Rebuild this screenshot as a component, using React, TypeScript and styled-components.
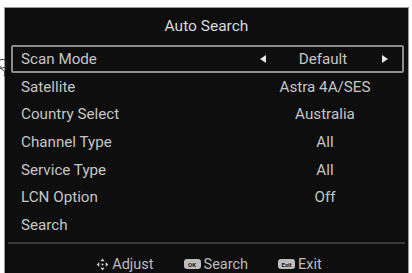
import React from "react";
import styled, { createGlobalStyle } from "styled-components";

const Global = createGlobalStyle`
  html, body { margin: 0; padding: 0; background: #ffffff; }
  body { font-family: Roboto, "Liberation Sans", Arial, sans-serif; }
`;

const Page = styled.div`
  width: 412px;
  height: 273px;
  overflow: hidden;
  position: relative;
  padding: 7px 3px 0 4px;
  box-sizing: border-box;
`;

const Panel = styled.div`
  width: 405px;
  height: 280px;
  background: #0e0e0e;
  border: 1px solid #9a9a9a;
  box-sizing: border-box;
  display: flex;
  flex-direction: column;
`;

const Title = styled.div`
  height: 37px;
  display: flex;
  align-items: center;
  justify-content: center;
  color: #dadada;
  font-size: 15.5px;
  padding-bottom: 2px;
  box-sizing: border-box;
`;

const List = styled.div`
  display: flex;
  flex-direction: column;
  padding: 0 4px 0 6px;
`;

const Row = styled.div<{ $active?: boolean }>`
  height: 27.7px;
  box-sizing: border-box;
  display: grid;
  grid-template-columns: 1fr 136px;
  align-items: center;
  padding: 0 11px 0 ${(p) => (p.$active ? 8 : 10)}px;
  border: ${(p) => (p.$active ? "2px solid #8c8c8c" : "none")};
  border-radius: 2px;
  color: #c6c6c6;
  font-size: 15.2px;
`;

const Label = styled.span`
  white-space: nowrap;
`;

const Value = styled.div`
  display: flex;
  align-items: center;
  justify-content: center;
  position: relative;
  white-space: nowrap;
`;

const Arrow = styled.span<{ $side: "left" | "right" }>`
  position: absolute;
  top: 50%;
  ${(p) => (p.$side === "left" ? "left: 5px;" : "right: 3px;")}
  transform: translateY(-50%);
  width: 0;
  height: 0;
  border-top: 4.5px solid transparent;
  border-bottom: 4.5px solid transparent;
  ${(p) =>
    p.$side === "left"
      ? "border-right: 6px solid #e6e6e6;"
      : "border-left: 6px solid #e6e6e6;"}
`;

const Divider = styled.div`
  height: 2px;
  background: #3a3a3a;
  margin: 3px 3px 0 3px;
`;

const Footer = styled.div`
  display: flex;
  align-items: center;
  justify-content: center;
  gap: 30px;
  padding-top: 12px;
  padding-left: 4px;
  color: #bdbdbd;
  font-size: 14.5px;
  line-height: 17px;
`;

const Hint = styled.div`
  display: flex;
  align-items: center;
  gap: 2px;
`;

const KeyBadge = styled.span`
  display: inline-flex;
  align-items: center;
  justify-content: center;
  width: 17px;
  height: 10px;
  border-radius: 3px;
  background: #bdbdbd;
  color: #1a1a1a;
  font-size: 6px;
  font-weight: 700;
  margin-right: 1px;
`;

const Mark = styled.svg`
  position: absolute;
  left: 0;
  top: 54px;
`;

const rows: { label: string; value?: string; active?: boolean }[] = [
  { label: "Scan Mode", value: "Default", active: true },
  { label: "Satellite", value: "Astra 4A/SES" },
  { label: "Country Select", value: "Australia" },
  { label: "Channel Type", value: "All" },
  { label: "Service Type", value: "All" },
  { label: "LCN Option", value: "Off" },
  { label: "Search" },
];

const DPad = () => (
  <svg width="15" height="15" viewBox="0 0 14 14">
    <path d="M7 1.5 L9 4 H5 Z" fill="#cfcfcf" />
    <path d="M7 12.5 L9 10 H5 Z" fill="#cfcfcf" />
    <path d="M1.5 7 L4 5 V9 Z" fill="#cfcfcf" />
    <path d="M12.5 7 L10 5 V9 Z" fill="#cfcfcf" />
    <circle cx="7" cy="7" r="1" fill="#cfcfcf" />
  </svg>
);

export default function App() {
  return (
    <>
      <Global />
      <Page>
        <Panel>
          <Title>Auto Search</Title>
          <List>
            {rows.map((r) => (
              <Row key={r.label} $active={r.active}>
                <Label>{r.label}</Label>
                <Value>
                  {r.active && <Arrow $side="left" />}
                  {r.value}
                  {r.active && <Arrow $side="right" />}
                </Value>
              </Row>
            ))}
          </List>
          <Divider />
          <Footer>
            <Hint>
              <DPad />
              <span>Adjust</span>
            </Hint>
            <Hint>
              <KeyBadge>OK</KeyBadge>
              <span>Search</span>
            </Hint>
            <Hint>
              <KeyBadge>Exit</KeyBadge>
              <span>Exit</span>
            </Hint>
          </Footer>
        </Panel>
        <Mark width="10" height="24" viewBox="0 0 10 24">
          <path d="M0 6 C5 4 8 8 6 12 C4 15 0 14 0 12" stroke="#222" strokeWidth="1" fill="none" />
          <path d="M0 14 C4 16 6 18 4 22" stroke="#222" strokeWidth="1" fill="none" />
        </Mark>
      </Page>
    </>
  );
}
